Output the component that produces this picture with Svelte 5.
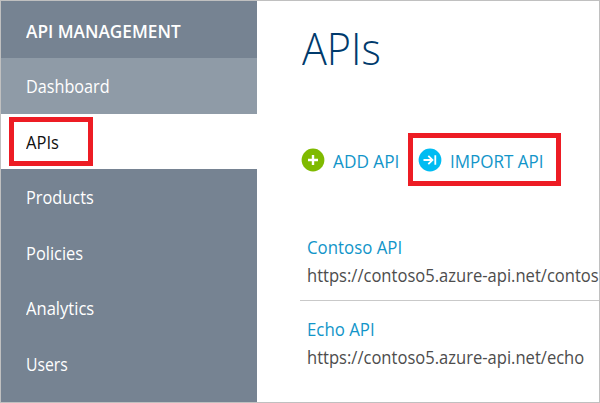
<script>
  const menu = [
    { label: 'Dashboard', kind: 'hover', fit: 0.9 },
    { label: 'APIs', kind: 'active', fit: 0.92 },
    { label: 'Products', kind: '', fit: 0.907 },
    { label: 'Policies', kind: '', fit: 0.912 },
    { label: 'Analytics', kind: '', fit: 0.92 },
    { label: 'Users', kind: '', fit: 0.875 }
  ];
  const apis = [
    { name: 'Contoso API', url: 'https://contoso5.azure-api.net/contos' },
    { name: 'Echo API', url: 'https://contoso5.azure-api.net/echo' }
  ];
</script>

<div class="frame">
  <nav>
    <div class="heading"><span class="fit" style="--fit: 0.957">API MANAGEMENT</span></div>
    {#each menu as item}
      <div class="item {item.kind}"><span class="fit" style="--fit: {item.fit}">{item.label}</span></div>
    {/each}
  </nav>
  <main>
    <h1><span class="fit" style="--fit: 0.92">APIs</span></h1>
    <div class="actions">
      <div class="action add">
        <svg width="24" height="24" viewBox="0 0 24 24">
          <circle cx="12" cy="12" r="11.4" fill="#7fba00" />
          <path d="M12 7v10M7 12h10" stroke="#fff" stroke-width="2.4" fill="none" />
        </svg>
        <span class="fit" style="--fit: 0.957">ADD API</span>
      </div>
      <div class="action import">
        <svg width="24" height="24" viewBox="0 0 24 24">
          <circle cx="12" cy="12" r="11.4" fill="#00bcf2" />
          <path d="M5.5 12h8.5M10.3 7.8l4.2 4.2l-4.2 4.2M17.3 7.3v9.4" stroke="#fff" stroke-width="1.8" fill="none" />
        </svg>
        <span class="fit" style="--fit: 0.945">IMPORT API</span>
      </div>
    </div>
    <div class="list">
      {#each apis as api}
        <div class="row">
          <div class="name"><span class="fit" style="--fit: 0.935">{api.name}</span></div>
          <div class="url"><span class="fit" style="--fit: 0.92">{api.url}</span></div>
        </div>
      {/each}
    </div>
  </main>
</div>

<style>
  .frame {
    box-sizing: border-box;
    width: 600px;
    height: 403px;
    border: 1px solid #c0c0c0;
    display: flex;
    overflow: hidden;
    background: #fff;
    font-family: "Open Sans", "Noto Sans", sans-serif;
    font-size: 18px;
    line-height: 24px;
  }
  .fit {
    display: inline-block;
    transform: scaleX(var(--fit));
    transform-origin: 0 50%;
    white-space: nowrap;
  }
  nav {
    flex: none;
    width: 256px;
    background: #768392;
    color: #fff;
  }
  .heading {
    height: 57px;
    display: flex;
    align-items: center;
    padding: 3px 0 0 25px;
    box-sizing: border-box;
    font-weight: 600;
  }
  .item {
    height: 55.5px;
    display: flex;
    align-items: center;
    padding: 1px 0 0 25px;
    box-sizing: border-box;
    position: relative;
  }
  .hover { background: #8f9ba7; }
  .active { background: #fff; color: #111; }
  .active::after {
    content: "";
    position: absolute;
    left: 8px;
    top: 3px;
    width: 84px;
    height: 49px;
    box-sizing: border-box;
    border: 5px solid #ed1c24;
  }
  main {
    flex: 1;
    min-width: 0;
    padding-left: 43px;
    overflow: hidden;
  }
  h1 {
    margin: 17px 0 0 2px;
    font-size: 45px;
    line-height: 60px;
    font-weight: 300;
    color: #003a6c;
  }
  .actions {
    display: flex;
    margin-top: 55px;
    height: 53px;
  }
  .action {
    display: flex;
    align-items: center;
    box-sizing: border-box;
    color: #1295c9;
  }
  .action svg { flex: none; }
  .action span { margin: 2px 0 0 8px; }
  .add { width: 108px; padding-left: 1px; }
  .import {
    width: 153px;
    border: 5px solid #ed1c24;
    padding-left: 5px;
  }
  .list { margin-top: 33px; }
  .row {
    box-sizing: border-box;
    height: 82px;
    padding: 14px 0 0 7px;
    white-space: nowrap;
    line-height: 28px;
  }
  .row:first-child { border-bottom: 1px solid #c9c9c9; }
  .name { color: #1295c9; }
  .url { color: #4d4d4d; }
</style>
